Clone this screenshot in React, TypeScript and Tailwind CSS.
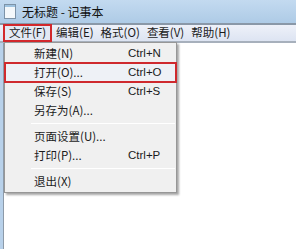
import React from "react";

const font = { fontFamily: '"Microsoft YaHei", "Noto Sans CJK SC", "Liberation Sans", sans-serif' };

type Item = { label: string; shortcut?: string; sep?: boolean; active?: boolean };

const items: Item[] = [
  { label: "新建(N)", shortcut: "Ctrl+N" },
  { label: "打开(O)...", shortcut: "Ctrl+O", active: true },
  { label: "保存(S)", shortcut: "Ctrl+S" },
  { label: "另存为(A)..." },
  { label: "", sep: true },
  { label: "页面设置(U)..." },
  { label: "打印(P)...", shortcut: "Ctrl+P" },
  { label: "", sep: true },
  { label: "退出(X)" },
];

const NotepadIcon = () => (
  <svg width="12" height="15" viewBox="0 0 12 15">
    <rect x="0.5" y="0.5" width="11" height="14" fill="#f4f8fb" stroke="#7d93a8" />
    <rect x="1" y="1" width="10" height="2" fill="#9fc3e0" />
  </svg>
);

export default function App() {
  return (
    <div className="relative w-[296px] h-[249px] overflow-hidden bg-white text-[#1b1b1b]" style={font}>
      <div className="h-[23px] flex items-center gap-[6px] pl-[4px] bg-gradient-to-b from-[#c3daf0] to-[#aecbe6]">
        <NotepadIcon />
        <span className="text-[12px] leading-none text-[#111]">无标题 - 记事本</span>
      </div>
      <div className="h-[2px] bg-[#8a98a8]" />
      <div className="h-[16px] flex items-center text-[11.5px] leading-none bg-gradient-to-b from-[#eef1f9] to-[#dde4f2]">
        <div className="ml-[3px] h-[18px] -mt-[1px] w-[49px] flex items-center justify-center border-2 border-[#d2282c] bg-[#e3e9f4]">
          文件(F)
        </div>
        <span className="ml-[4px]">编辑(E)</span>
        <span className="ml-[7px]">格式(O)</span>
        <span className="ml-[7px]">查看(V)</span>
        <span className="ml-[7px]">帮助(H)</span>
      </div>
      <div className="h-[2px] bg-[#a7b0bc]" />
      <div className="flex h-[206px]">
        <div className="w-[3px] bg-[#b8d1ea]" />
        <div className="w-px bg-[#8d9aa8]" />
        <div className="flex-1 bg-white" />
      </div>

      <div className="absolute left-[4px] top-[42px] w-[173px] h-[151px] pt-px bg-[#f0f0f0] border border-[#979797] shadow-[2px_2px_2px_rgba(0,0,0,0.35)] text-[11.5px] leading-none">
        {items.map((it, i) =>
          it.sep ? (
            <div key={i} className="h-[7px] flex items-center pl-[26px] pr-[1px]">
              <div className="h-px w-full bg-[#d7d7d7] border-b border-white" />
            </div>
          ) : (
            <div
              key={i}
              className={
                it.active
                  ? "h-[21px] -my-px flex items-center pl-[28px] border-2 border-[#cf2a2e] bg-[#eef1f6] -mx-px"
                  : "h-[19px] flex items-center pl-[29px]"
              }
            >
              <span className="w-[94px]">{it.label}</span>
              {it.shortcut && (
                <span className="text-[11.5px]" style={{ fontFamily: '"Liberation Sans", sans-serif' }}>
                  {it.shortcut}
                </span>
              )}
            </div>
          )
        )}
      </div>
    </div>
  );
}
